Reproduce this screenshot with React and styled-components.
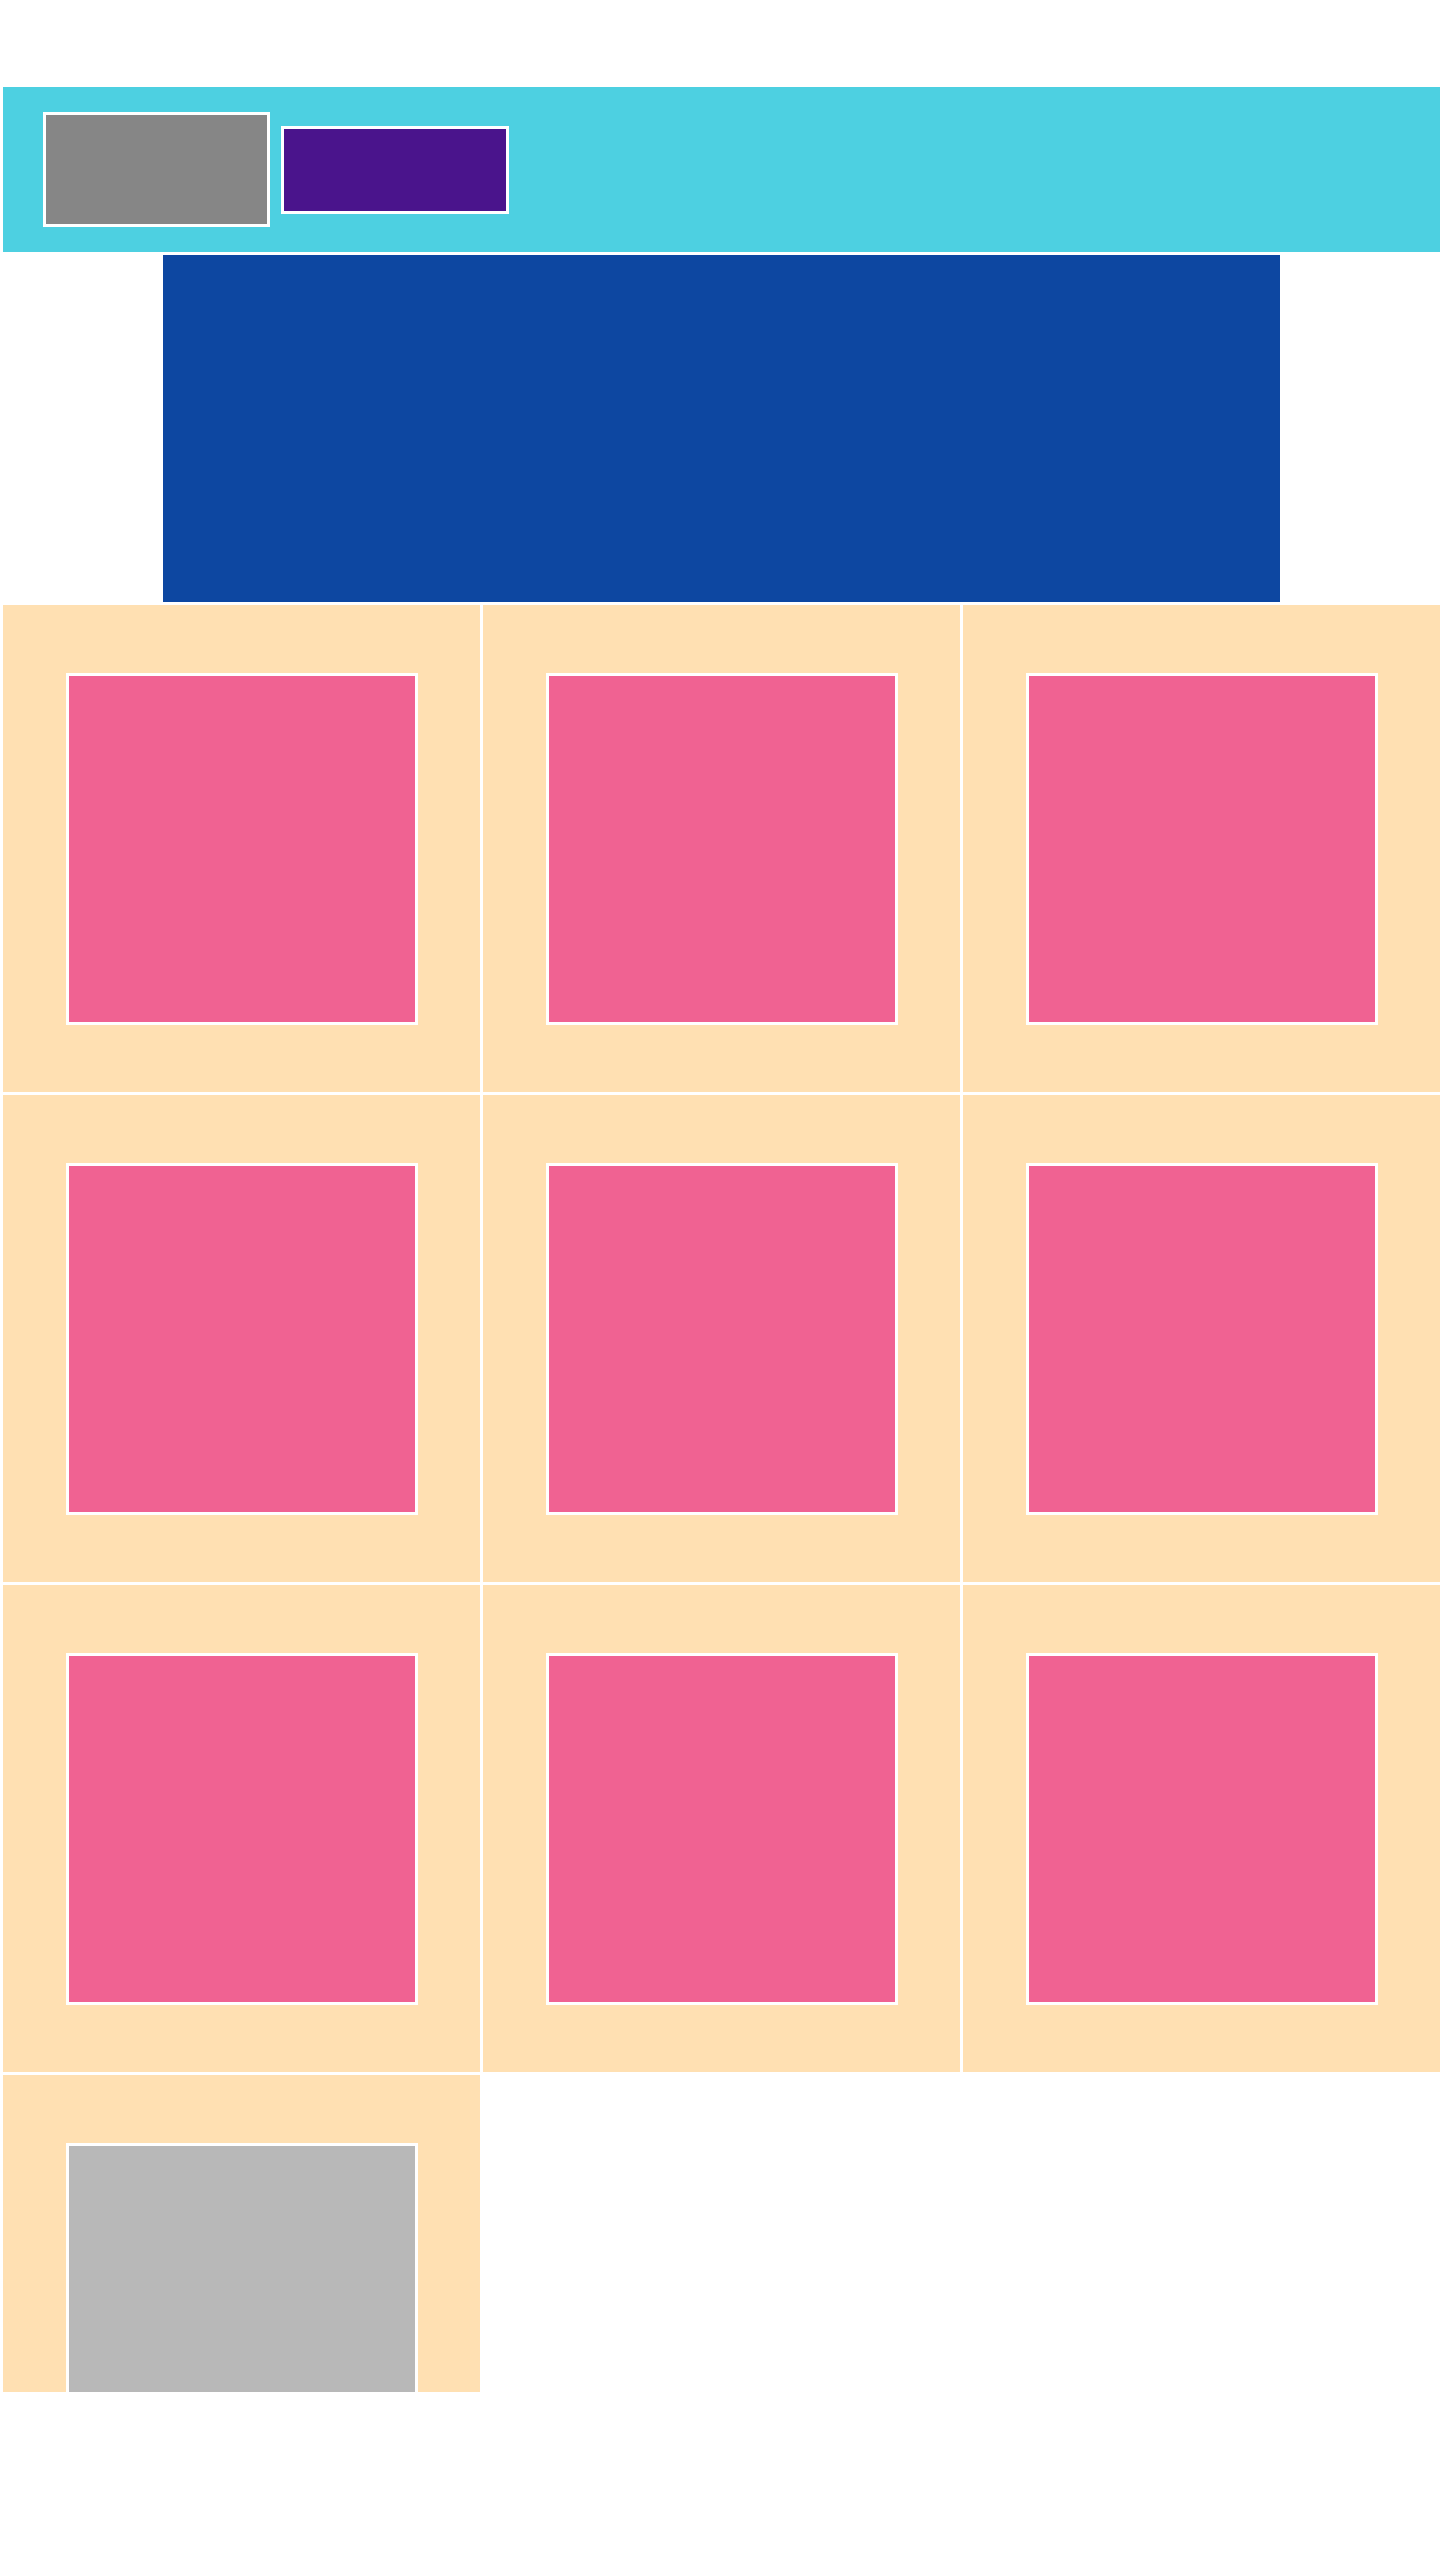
import React from "react";
import styled, { createGlobalStyle } from "styled-components";

const GlobalStyle = createGlobalStyle`
  html, body {
    margin: 0;
    padding: 0;
    background: #ffffff;
    font-family: "Liberation Sans", Arial, sans-serif;
  }
  * {
    box-sizing: border-box;
  }
`;

// 9 pink tiles, then a grey placeholder one
const tiles = [...Array(9).fill("pink"), "gray"];

const App = () => {
  return (
    <>
      <GlobalStyle />
      <Page>
        <Header>
          <Logo />
          <NavButton />
        </Header>
        <Hero />
        <GridWindow>
          <Grid>
            {tiles.map((kind, i) => (
              <Cell key={i}>
                <Tile $kind={kind} />
              </Cell>
            ))}
          </Grid>
        </GridWindow>
      </Page>
    </>
  );
};

export default App;

const Page = styled.div`
  display: flex;
  flex-direction: column;
  gap: 3px;
  padding: 87px 0 168px 3px;
  min-height: 2560px;
`;

const Header = styled.header`
  display: flex;
  align-items: center;
  gap: 11px;
  height: 165px;
  padding-left: 40px;
  background-color: #4dd0e1;
`;

const Logo = styled.div`
  width: 227px;
  height: 115px;
  border: 3px solid #ffffff;
  background-color: #868686;
`;

const NavButton = styled.div`
  width: 228px;
  height: 88px;
  border: 3px solid #ffffff;
  background-color: #4a148c;
`;

const Hero = styled.section`
  width: 1117px;
  height: 347px;
  margin: 0 auto;
  background-color: #0d47a1;
`;

const GridWindow = styled.div`
  height: 1787px;
  overflow: hidden;
`;

const Grid = styled.div`
  display: grid;
  grid-template-columns: repeat(3, 477px);
  grid-auto-rows: 487px;
  gap: 3px;
`;

const Cell = styled.div`
  display: flex;
  align-items: center;
  justify-content: center;
  background-color: #ffe0b2;
`;

const Tile = styled.div`
  width: 352px;
  height: 352px;
  border: 3px solid #ffffff;
  background-color: ${(props) => (props.$kind === "gray" ? "#b8b8b8" : "#f06292")};
`;
